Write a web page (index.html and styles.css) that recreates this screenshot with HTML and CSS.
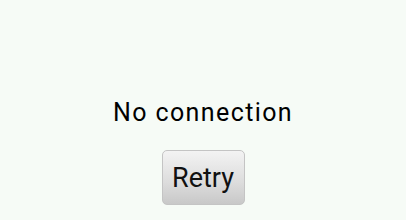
FILE: index.html
```html
<!DOCTYPE html>
<html lang="en">
<head>
    <meta charset="UTF-8">
    <title>No connection</title>
    <link rel="stylesheet" href="styles.css">
</head>
<body>
    <div class="offline">
        <p class="message">No connection</p>
        <button class="retry">Retry</button>
    </div>
</body>
</html>
```

FILE: styles.css
```css
html, body {
    margin: 0;
    height: 100%;
}
body {
    background: #f6fbf6;
    font-family: Roboto, 'Noto Sans', sans-serif;
    color: #000;
}
.offline {
    display: flex;
    flex-direction: column;
    align-items: center;
    padding-top: 97px;
}
.message {
    margin: 0;
    font-size: 25px;
    letter-spacing: 1.4px;
    line-height: 32px;
}
.retry {
    margin-top: 21px;
    width: 83px;
    height: 55px;
    border: 1px solid #c4c4c4;
    border-radius: 5px;
    background: linear-gradient(#f3f3f3 0%, #dcdcdc 60%, #c8c8c8 100%);
    font-family: Roboto, 'Noto Sans', sans-serif;
    font-size: 27px;
    color: #111;
    padding: 0;
}
```
